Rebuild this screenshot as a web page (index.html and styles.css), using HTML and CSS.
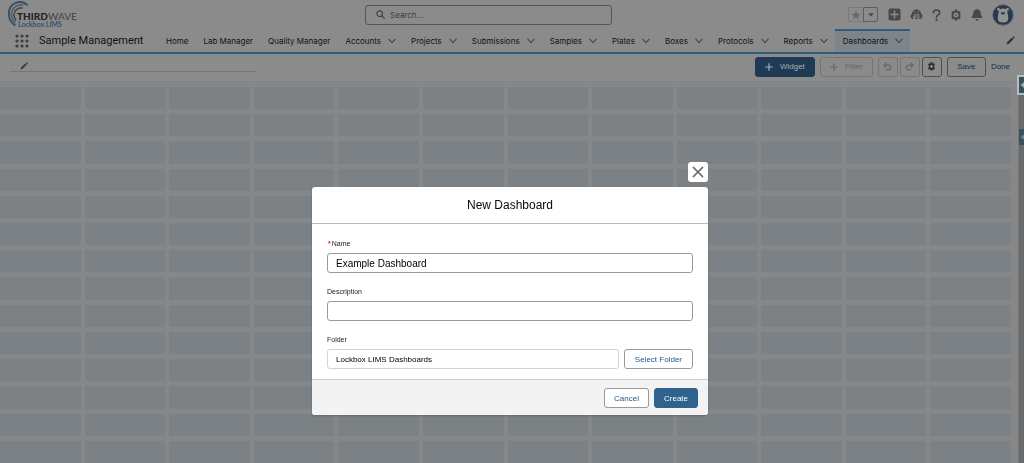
FILE: index.html
```
<!DOCTYPE html>
<html lang="en">
<head>
<meta charset="utf-8">
<meta name="viewport" content="width=device-width, initial-scale=1">
<title>New Dashboard</title>
<link rel="stylesheet" href="styles.css">
</head>
<body>
<svg class="defs" aria-hidden="true">
  <symbol id="chevron" viewBox="0 0 8 8"><path d="M.8 2.200 4 5.600 7.200 2.200" fill="none" stroke="currentColor" stroke-width="1.100" stroke-linecap="round" stroke-linejoin="round"/></symbol>
  <symbol id="pencil" viewBox="0 0 8 8"><path d="M.4 7.600 1 5.600 5.200 1.400 6.600 2.800 2.400 7zM5.700.9 6.300.4q.4-.3.8.1l.5.5q.4.4 0 .8l-.5.6z" fill="currentColor"/></symbol>
  <symbol id="gear" viewBox="0 0 12 12"><path d="M6 .4 7.200.8 7.700 2.300 9.300 1.900 10.800 3.500 10 5 10.700 6 10 7.100 10.800 8.600 9.300 10.200 7.700 9.800 7.200 11.300 6 11.700 4.800 11.300 4.300 9.800 2.700 10.200 1.200 8.600 2 7.100 1.300 6 2 5 1.200 3.500 2.700 1.900 4.300 2.300 4.800.8zM6 3.500a2.500 2.500 0 1 0 0 5 2.500 2.500 0 0 0 0-5z" fill="currentColor" fill-rule="evenodd"/><path d="M6.700 4.100 4.900 6.200H6l-.5 1.800 1.700-2.300H6.100z" fill="currentColor"/></symbol>
  <symbol id="cog" viewBox="0 0 8 8"><path d="M3.200.3h1.600l.3 1.100 1.200-.3.8 1.400-.8.800v1.300l.9.9-.8 1.300-1.200-.3-.4 1.100H3.200l-.3-1.100-1.200.3-.8-1.400.8-.8V3.400l-.8-.9.8-1.300 1.200.3zM4 2.700a1.300 1.300 0 1 0 0 2.600 1.300 1.300 0 0 0 0-2.600z" fill="currentColor" fill-rule="evenodd"/></symbol>
  <symbol id="plus" viewBox="0 0 8 8"><path d="M4 .7v6.600M.7 4h6.600" stroke="currentColor" stroke-width="1.200" stroke-linecap="round"/></symbol>
  <symbol id="undo" viewBox="0 0 8 8"><path d="M2.700.8.8 2.800l1.900 2M1 2.800h3.800a2 2 0 0 1 0 4.200H3" fill="none" stroke="currentColor" stroke-width="1.100" stroke-linecap="round" stroke-linejoin="round"/></symbol>
</svg>
<div class="page">
  <header class="top">
    <a class="logo" href="#" aria-label="Third Wave Lockbox LIMS">
      <svg width="72" height="28" viewBox="0 0 72 28">
        <g fill="none">
          <path d="M19.500 4.200A11 11 0 0 0 1 13.500Q1 20.500 7.500 24.500" stroke="#31536f" stroke-width="2"/>
          <path d="M15.500 4.200A9.800 9.800 0 0 0 3.400 13.500Q3.600 18.500 7.500 21.800" stroke="#5a5d60" stroke-width="1.600"/>
          <path d="M14.500 7A7.500 7.500 0 0 0 5.900 13.500Q6 17 8 19.500" stroke="#454749" stroke-width="1.600"/>
        </g>
        <text class="logo-third" x="9" y="19">THIRD</text>
        <text class="logo-wave" x="40" y="19">WAVE</text>
        <text class="logo-sub" x="10" y="26">Lockbox LIMS</text>
      </svg>
    </a>
    <label class="search">
      <svg width="9" height="9" viewBox="0 0 9 9"><circle cx="3.700" cy="3.700" r="2.800" fill="none" stroke="currentColor" stroke-width="1.100"/><path d="M5.800 5.800 8.300 8.300" stroke="currentColor" stroke-width="1.200" stroke-linecap="round"/></svg>
      <input type="search" placeholder="Search..." aria-label="Search">
    </label>
    <div class="tools">
      <div class="favorites">
        <button aria-label="Favorite" class="star"><svg width="10" height="10" viewBox="0 0 10 10"><path d="M5 .3 6.200 3.800H9.800L6.900 5.900 8 9.500 5 7.300 2 9.500 3.100 5.900.2 3.800H3.800z" fill="currentColor"/></svg></button>
        <button aria-label="Favorites list" class="caret"><svg width="6" height="4" viewBox="0 0 6 4"><path d="M.3.3h5.400L3 3.700z" fill="currentColor"/></svg></button>
      </div>
      <button aria-label="Add"><svg width="13" height="13" viewBox="0 0 13 13"><rect x=".5" y=".5" width="12" height="12" rx="2" fill="currentColor"/><path d="M6.500 3v7M3 6.500h7" stroke="#8b8b8b" stroke-width="1.500" stroke-linecap="round"/></svg></button>
      <button aria-label="Guidance"><svg width="13" height="13" viewBox="0 0 13 13"><path d="M1 9.800A2.500 2.500 0 0 1 1.800 6 5 5 0 0 1 4.200 2.200Q6.500.3 8.800 2.200A5 5 0 0 1 11.300 6 2.500 2.500 0 0 1 12 9.800Q11.500 11 9.500 11L7.300 7.600 6.500 8.700 8 11H5L6 9.300 4.700 7.400 3 11Q1.500 11 1 9.800z" fill="currentColor"/><path d="M3 9.500 5 6 6.500 8 8 5.500 10 9.500" fill="none" stroke="#8b8b8b" stroke-width=".8"/><circle cx="5.200" cy="3.800" r=".6" fill="#8b8b8b"/><circle cx="7.800" cy="3.800" r=".6" fill="#8b8b8b"/></svg></button>
      <button aria-label="Help"><svg width="9" height="12" viewBox="0 0 9 12"><path d="M1.300 3.600Q1.500 1 4.500 1T7.700 3.500Q7.700 5 6 5.900 4.500 6.700 4.500 8.300" fill="none" stroke="currentColor" stroke-width="1.700" stroke-linecap="round"/><circle cx="4.500" cy="10.900" r="1.100" fill="currentColor"/></svg></button>
      <button aria-label="Setup"><svg width="12" height="12"><use href="#gear"/></svg></button>
      <button aria-label="Notifications"><svg width="12" height="12" viewBox="0 0 12 12"><path d="M6 .3q3.500.3 3.700 4 0 2.600 1.700 3.700.3 1-.4 1H1q-.7 0-.4-1Q2.300 6.900 2.300 4.300 2.500.6 6 .3zM4.300 9.900h3.400Q7.200 11.700 6 11.700T4.300 9.900z" fill="currentColor"/></svg></button>
      <button aria-label="User profile" class="avatar"><svg width="22" height="22" viewBox="0 0 22 22"><circle cx="11" cy="11" r="10.200" fill="#29384c" stroke="#555f6b"/><circle cx="6.500" cy="5.300" r="1.500" fill="#929292"/><circle cx="15.500" cy="5.300" r="1.500" fill="#929292"/><path d="M11 4.600q4 0 4.500 4l.8 5.400q.3 4.500-5.300 4.500T5.700 14l.8-5.400q.5-4 4.500-4z" fill="#929292"/><path d="M9 8.300h4q.3 2.300-2 2.300T9 8.300z" fill="#29384c"/></svg></button>
    </div>
  </header>
  <nav class="nav" aria-label="Main">
    <button class="launcher" aria-label="App launcher"><svg width="14" height="14" viewBox="0 0 14 14" fill="currentColor"><circle cx="2" cy="2" r="1.600"/><circle cx="7" cy="2" r="1.600"/><circle cx="12" cy="2" r="1.600"/><circle cx="2" cy="7" r="1.600"/><circle cx="7" cy="7" r="1.600"/><circle cx="12" cy="7" r="1.600"/><circle cx="2" cy="12" r="1.600"/><circle cx="7" cy="12" r="1.600"/><circle cx="12" cy="12" r="1.600"/></svg></button>
    <span class="app-name">Sample Management</span>
    <div class="tabs">
      <a href="#">Home</a>
      <a href="#">Lab Manager</a>
      <a href="#">Quality Manager</a>
      <a href="#">Accounts<svg><use href="#chevron"/></svg></a>
      <a href="#">Projects<svg><use href="#chevron"/></svg></a>
      <a href="#">Submissions<svg><use href="#chevron"/></svg></a>
      <a href="#">Samples<svg><use href="#chevron"/></svg></a>
      <a href="#">Plates<svg><use href="#chevron"/></svg></a>
      <a href="#">Boxes<svg><use href="#chevron"/></svg></a>
      <a href="#">Protocols<svg><use href="#chevron"/></svg></a>
      <a href="#">Reports<svg><use href="#chevron"/></svg></a>
      <a href="#" class="active" aria-current="page">Dashboards<svg><use href="#chevron"/></svg></a>
    </div>
    <button class="edit-nav" aria-label="Edit navigation"><svg width="9" height="9"><use href="#pencil"/></svg></button>
  </nav>
  <div class="toolbar">
    <button class="title-edit" aria-label="Edit dashboard name"><svg width="8" height="8"><use href="#pencil"/></svg></button>
    <div class="actions">
      <button class="btn brand"><svg width="8" height="8"><use href="#plus"/></svg>Widget</button>
      <button class="btn muted" disabled><svg width="8" height="8"><use href="#plus"/></svg>Filter</button>
      <div class="group">
        <button class="btn square muted" disabled aria-label="Undo"><svg width="9" height="9"><use href="#undo"/></svg></button>
        <button class="btn square muted" disabled aria-label="Redo"><svg class="flip" width="9" height="9"><use href="#undo"/></svg></button>
        <button class="btn square dark" aria-label="Dashboard properties"><svg width="9" height="9"><use href="#cog"/></svg></button>
      </div>
      <button class="btn save">Save</button>
      <a class="done" href="#">Done</a>
    </div>
  </div>
  <main class="workspace">
    <div class="canvas" id="canvas"></div>
    <aside class="side">
      <button class="handle lit" aria-label="Open panel"><svg width="6" height="8" viewBox="0 0 6 8"><path d="M5.500.5 1.500 4l4 3.500z" fill="currentColor"/></svg></button>
      <button class="handle" aria-label="Open second panel"><svg width="6" height="8" viewBox="0 0 6 8"><path d="M5.500 1 1.500 4l4 3z" fill="currentColor"/></svg></button>
    </aside>
  </main>
</div>
<div class="overlay">
  <form class="modal" role="dialog" aria-labelledby="dialog-title">
    <button class="close" type="button" aria-label="Close"><svg width="12" height="12" viewBox="0 0 12 12"><path d="M1.400 1.400 10.600 10.600M10.600 1.400 1.400 10.600" stroke="currentColor" stroke-width="1.500" stroke-linecap="round"/></svg></button>
    <h2 id="dialog-title">New Dashboard</h2>
    <div class="fields">
      <div class="field">
        <label for="name"><span class="required">*</span>Name</label>
        <input id="name" type="text" value="Example Dashboard" required>
      </div>
      <div class="field">
        <label for="description">Description</label>
        <input id="description" type="text">
      </div>
      <div class="field">
        <label for="folder">Folder</label>
        <div class="folder-row">
          <input id="folder" class="folder" type="text" value="Lockbox LIMS Dashboards" readonly>
          <button class="btn plain" type="button">Select Folder</button>
        </div>
      </div>
    </div>
    <footer>
      <button class="btn plain" type="button">Cancel</button>
      <button class="btn create" type="submit">Create</button>
    </footer>
  </form>
</div>
<script src="canvas.js"></script>
</body>
</html>
```
FILE: canvas.js
```
// Fill the empty dashboard canvas with its 12-column placeholder cells.
const canvas = document.getElementById("canvas");
const columns = 12;
const rows = 14;
for (let i = 0; i < columns * rows; i += 1) {
  const cell = document.createElement("div");
  cell.className = "cell";
  canvas.append(cell);
}
```
FILE: styles.css
```
* { box-sizing: border-box; }
body {
  margin: 0;
  background: #8b8b8b;
  color: #121212;
  font-family: Inter, "Liberation Sans", sans-serif;
  font-size: 8px;
}
button, input { font: inherit; color: inherit; }
button { padding: 0; border: 0; background: none; }
a { color: inherit; text-decoration: none; }
svg { display: block; flex: none; }
.defs { position: absolute; width: 0; height: 0; }

.page { display: flex; flex-direction: column; min-height: 100vh; }

.top {
  display: grid;
  grid-template-columns: minmax(0, 321px) minmax(0, 247px) minmax(0, 1fr);
  align-items: center;
  height: 29px;
  padding: 0 10px 0 8px;
  column-gap: 36px;
}
.logo-third, .logo-wave { font: 900 10px Lato, sans-serif; fill: #242424; }
.logo-wave { font-weight: 400; fill: #404040; }
.logo-sub { font: 700 7px Lato, sans-serif; fill: #31536f; }
.search {
  display: flex;
  align-items: center;
  gap: 5px;
  height: 20px;
  padding: 0 10px;
  border: 1px solid #555;
  border-radius: 3px;
  color: #3e3e3e;
}
.search input { flex: 1; min-width: 0; padding: 0; border: 0; outline: 0; background: none; }
.search input::placeholder { color: #404040; opacity: 1; }
.tools { display: flex; align-items: center; justify-content: flex-end; gap: 9px; color: #484848; }
.favorites { display: flex; margin-right: 1px; }
.favorites button { display: grid; place-items: center; width: 15px; height: 15px; border: 1px solid #7a7a7a; }
.favorites .star { border-right: 0; border-radius: 2px 0 0 2px; color: #686868; }
.favorites .caret { border-color: #5e5e5e; border-radius: 0 2px 2px 0; }

.nav {
  display: flex;
  height: 25px;
  padding: 0 9px 0 15px;
  align-items: stretch;
  border-bottom: 2px solid #315d7d;
}
.launcher { color: #3f3f3f; }
.app-name { display: flex; align-items: center; width: 119px; margin-left: 10px; font-family: Roboto, sans-serif; font-size: 11px; white-space: nowrap; }
.tabs { display: flex; }
.tabs a { display: flex; align-items: center; gap: 7px; padding: 0 7px 0 8px; white-space: nowrap; }
.tabs svg { width: 8px; height: 8px; color: #464646; }
.tabs .active { border-top: 2px solid #315d7d; background: #7d858b; padding-bottom: 2px; }
.edit-nav { margin-left: auto; color: #333; }

.toolbar {
  display: flex;
  align-items: center;
  justify-content: space-between;
  height: 28px;
  padding: 0 14px 2px 10px;
  border-bottom: 1px solid #818384;
  font-family: "Liberation Sans", Arial, sans-serif;
}
.title-edit { width: 247px; height: 10px; padding-left: 10px; border-bottom: 1px solid #777; color: #3c3c3c; }
.actions, .group { display: flex; align-items: center; }
.actions { gap: 5px; }
.group { gap: 2px; }
.btn {
  display: flex;
  align-items: center;
  justify-content: center;
  gap: 7px;
  height: 20px;
  border: 1px solid #6f6f6f;
  border-radius: 3px;
  white-space: nowrap;
}
.brand { width: 60px; border-color: #1e3a54; background: #1e3a54; color: #a8aeb4; }
.muted { width: 53px; border-color: #747474; color: #666; }
.square { width: 20px; }
.dark { border-color: #4f4f4f; color: #2d2d2d; }
.flip { transform: scaleX(-1); }
.save { width: 39px; border-color: #4f4f4f; color: #162f46; }
.done { color: #162f46; }

.workspace { display: flex; flex: 1; background: #868788; }
.canvas {
  display: grid;
  flex: 1;
  grid-template-columns: repeat(12, 1fr);
  grid-template-rows: repeat(14, 1fr);
  gap: 5px 4px;
  margin-top: 5px;
}
.cell { background: #7b8184; }
.side { display: flex; flex-direction: column; width: 6px; margin-left: 7px; border-left: 1px solid #777; background: #6a6a6a; }
.handle { display: grid; place-items: center; width: 5px; height: 16px; background: #36525a; color: #a0aaae; overflow: hidden; }
.handle + .handle { margin-top: 36px; color: #77868a; }
.lit { margin-top: -5px; outline: 2px solid #b7bdbf; }

.overlay {
  position: fixed;
  inset: 0;
  display: flex;
  align-items: flex-start;
  justify-content: center;
  padding: 187px 4px 0 0;
  font-family: "Liberation Sans", Arial, sans-serif;
}
.modal { position: relative; width: 396px; max-width: 90%; border-radius: 3px; background: #fff; box-shadow: 0 1px 2px #5558; }
.close {
  position: absolute;
  right: 0;
  bottom: 100%;
  display: grid;
  place-items: center;
  width: 20px;
  height: 20px;
  margin-bottom: 5px;
  border-radius: 3px;
  background: #fff;
  color: #6c6c6c;
}
.modal h2 { margin: 0; padding: 10px 0; border-bottom: 1px solid #b9b9b9; color: #080808; font-size: 12px; font-weight: 400; line-height: 16px; text-align: center; }
.fields { display: flex; flex-direction: column; gap: 14px; padding: 15px 15px 10px; }
.field label { display: block; margin-bottom: 4px; color: #222; font-size: 7px; line-height: 10px; }
.required { margin: 0 1px; color: #c23934; font-weight: 700; }
.field input { width: 100%; height: 20px; padding: 0 8px; border: 1px solid #999; border-radius: 3px; background: #fff; color: #000; font-size: 10px; }
.field .folder { flex: 1; min-width: 0; border-color: #d4d4d4; font-size: 8px; }
.folder-row { display: flex; gap: 5px; }
.plain { padding: 0 10px; border-color: #999; background: #fff; color: #1f5585; }
.modal footer { display: flex; justify-content: flex-end; gap: 5px; padding: 8px 10px 7px; border-top: 1px solid #c9c9c9; border-radius: 0 0 3px 3px; background: #f3f3f3; }
.modal footer .btn { padding: 0 9px; }
.modal footer .create { border-color: #2f628c; background: #2f628c; color: #fff; }
```
